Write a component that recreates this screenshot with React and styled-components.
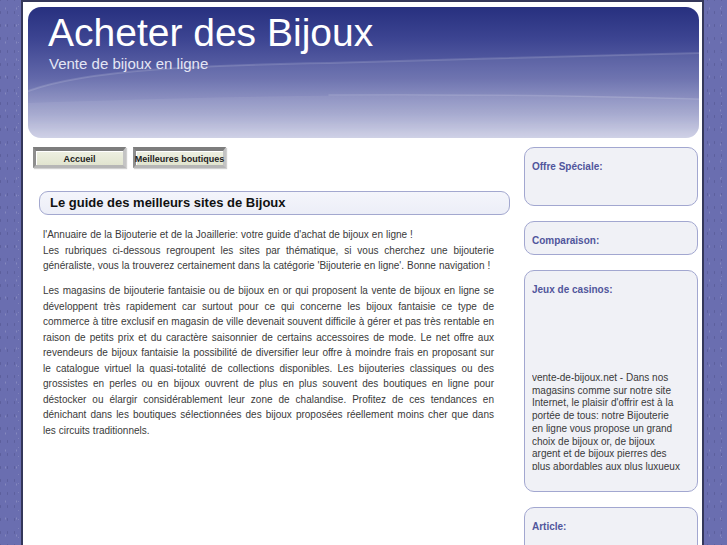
import React from 'react';
import styled, { createGlobalStyle } from 'styled-components';

const GlobalStyle = createGlobalStyle`
    body {
        margin: 0;
        background-color: #6a6eb0;
        background-image:
            radial-gradient(rgba(255, 255, 255, 0.18) 0.5px, transparent 0.8px),
            radial-gradient(rgba(40, 40, 90, 0.22) 0.5px, transparent 0.8px),
            radial-gradient(rgba(255, 255, 255, 0.14) 0.4px, transparent 0.7px);
        background-size: 11px 17px, 7px 13px, 19px 9px;
        background-position: 0 0, 4px 6px, 9px 2px;
        font-family: "Liberation Sans", Arial, sans-serif;
    }
`;

const Page = styled.div`
    box-sizing: border-box;
    width: 683px;
    min-height: 100vh;
    margin-left: 21px;
    padding: 5px 3px 0 5px;
    background: #ffffff;
    border: 2px solid #34375a;
    border-bottom: none;
`;

const Header = styled.header`
    position: relative;
    height: 131px;
    border-radius: 13px;
    overflow: hidden;
    background: linear-gradient(180deg, #27307f 0%, #3d4592 25%, #6369aa 55%, #9a9ec9 82%, #c9cbe3 100%);
`;

const Waves = styled.svg`
    position: absolute;
    inset: 0;
    width: 100%;
    height: 100%;
`;

const Title = styled.h1`
    position: relative;
    margin: 0;
    padding: 4px 0 0 20px;
    font-size: 39px;
    font-weight: normal;
    line-height: 44px;
    color: #ffffff;
`;

const Subtitle = styled.div`
    position: relative;
    padding-left: 21px;
    font-size: 15px;
    line-height: 18px;
    color: #e4e6f4;
`;

const Body = styled.div`
    display: flex;
    margin-top: 9px;
`;

const Main = styled.main`
    width: 479px;
    padding-left: 5px;
`;

const Nav = styled.nav`
    display: flex;
    gap: 7px;
`;

const NavButton = styled.a`
    box-sizing: border-box;
    display: flex;
    align-items: center;
    justify-content: center;
    width: 93px;
    height: 21px;
    padding-top: 1px;
    font-size: 9px;
    font-weight: bold;
    color: #1d1d1d;
    white-space: nowrap;
    background: linear-gradient(180deg, #eef0e2 0%, #e1e4cf 100%);
    border-style: solid;
    border-width: 4px 3px 3px 3px;
    border-color: #7d7d7d #c4c4c4 #b6b6b6 #8e8e8e;
    box-shadow: inset 1px 1px 0 #ffffff, 1px 1px 1px #d0d0d0;
`;

const GuideTitle = styled.h2`
    box-sizing: border-box;
    height: 24px;
    margin: 23px 2px 0 6px;
    padding: 0 10px;
    font-size: 13px;
    line-height: 22px;
    color: #111111;
    background: linear-gradient(180deg, #f4f5fb 0%, #eceef7 100%);
    border: 1px solid #a3a8cf;
    border-radius: 9px;
`;

const Text = styled.div`
    margin-top: 12px;
    padding: 0 18px 0 10px;
    font-size: 10px;
    line-height: 15.5px;
    word-spacing: 0.2px;
    color: #3a3a3a;
    text-align: justify;

    p {
        margin: 0 0 9.5px;
    }
`;

const Sidebar = styled.aside`
    display: flex;
    flex-direction: column;
    gap: 15px;
    width: 174px;
    margin-left: 12px;
`;

const Box = styled.section`
    box-sizing: border-box;
    height: ${p => p.$h}px;
    padding: 12px 8px 0 7px;
    background: #f0f1f6;
    border: 1px solid #a2a7d0;
    border-radius: 10px;
`;

const BoxTitle = styled.h3`
    margin: 0;
    font-size: 10px;
    line-height: 14px;
    color: #50569c;
`;

const BoxText = styled.div`
    width: 150px;
    height: 98px;
    margin-top: 75px;
    overflow: hidden;
    font-size: 10px;
    line-height: 12.7px;
    color: #3a3a3a;
`;

export default function App() {
    return (
        <>
            <GlobalStyle />
            <Page>
                <Header>
                    <Waves viewBox="0 0 670 131" preserveAspectRatio="none">
                        <path d="M0 84 C60 62 180 58 300 56 C420 53 560 48 670 46 L670 131 L0 131 Z" fill="rgba(255,255,255,0.08)" />
                        <path d="M0 84 C60 62 180 58 300 56 C420 53 560 48 670 46" fill="none" stroke="rgba(255,255,255,0.14)" strokeWidth="2" />
                        <path d="M0 96 C120 92 260 88 400 88 C520 88 610 90 670 92 L670 131 L0 131 Z" fill="rgba(255,255,255,0.07)" />
                        <path d="M300 88 C420 87 560 89 670 92" fill="none" stroke="rgba(255,255,255,0.14)" strokeWidth="1.5" />
                    </Waves>
                    <Title>Acheter des Bijoux</Title>
                    <Subtitle>Vente de bijoux en ligne</Subtitle>
                </Header>
                <Body>
                    <Main>
                        <Nav>
                            <NavButton>Accueil</NavButton>
                            <NavButton>Meilleures boutiques</NavButton>
                        </Nav>
                        <GuideTitle>Le guide des meilleurs sites de Bijoux</GuideTitle>
                        <Text>
                            <p>
                                l'Annuaire de la Bijouterie et de la Joaillerie: votre guide d'achat de bijoux en ligne !<br />
                                Les rubriques ci-dessous regroupent les sites par thématique, si vous cherchez une bijouterie généraliste, vous la trouverez certainement dans la catégorie 'Bijouterie en ligne'. Bonne navigation !
                            </p>
                            <p>
                                Les magasins de bijouterie fantaisie ou de bijoux en or qui proposent la vente de bijoux en ligne se développent très rapidement car surtout pour ce qui concerne les bijoux fantaisie ce type de commerce à titre exclusif en magasin de ville devenait souvent difficile à gérer et pas très rentable en raison de petits prix et du caractère saisonnier de certains accessoires de mode. Le net offre aux revendeurs de bijoux fantaisie la possibilité de diversifier leur offre à moindre frais en proposant sur le catalogue virtuel la quasi-totalité de collections disponibles. Les bijouteries classiques ou des grossistes en perles ou en bijoux ouvrent de plus en plus souvent des boutiques en ligne pour déstocker ou élargir considérablement leur zone de chalandise. Profitez de ces tendances en dénichant dans les boutiques sélectionnées des bijoux proposées réellement moins cher que dans les circuits traditionnels.
                            </p>
                        </Text>
                    </Main>
                    <Sidebar>
                        <Box $h={59}>
                            <BoxTitle>Offre Spéciale:</BoxTitle>
                        </Box>
                        <Box $h={34}>
                            <BoxTitle>Comparaison:</BoxTitle>
                        </Box>
                        <Box $h={222}>
                            <BoxTitle>Jeux de casinos:</BoxTitle>
                            <BoxText>
                                vente-de-bijoux.net - Dans nos magasins comme sur notre site Internet, le plaisir d'offrir est à la portée de tous: notre Bijouterie en ligne vous propose un grand choix de bijoux or, de bijoux argent et de bijoux pierres des plus abordables aux plus luxueux
                            </BoxText>
                        </Box>
                        <Box $h={120}>
                            <BoxTitle>Article:</BoxTitle>
                        </Box>
                    </Sidebar>
                </Body>
            </Page>
        </>
    );
}
